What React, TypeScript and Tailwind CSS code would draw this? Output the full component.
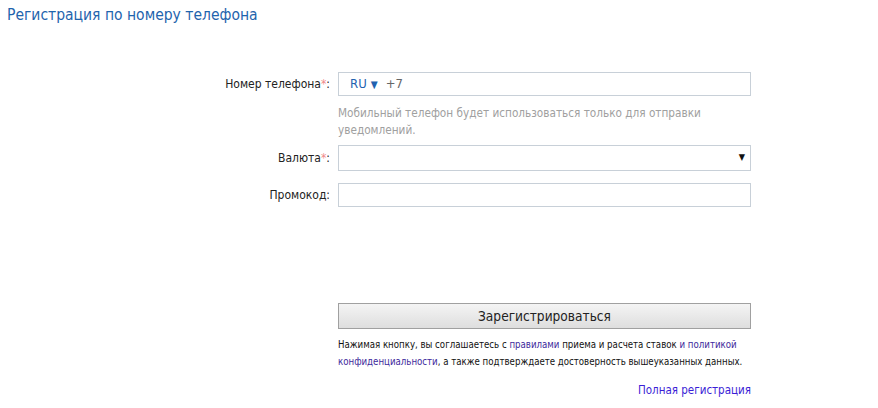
import React from 'react';

const font = { fontFamily: '"DejaVu Sans Condensed", "DejaVu Sans", sans-serif' };

function Label({ text, required }: { text: string; required?: boolean }) {
  return (
    <div className="w-[330px] shrink-0 text-right text-[12px] text-[#222]">
      {text}
      {required && <span className="text-[#f08a8a]">*</span>}:
    </div>
  );
}

export default function App() {
  return (
    <div className="w-[878px] h-[408px] bg-white relative" style={font}>
      {/* Title */}
      <h1 className="pl-[7px] pt-[5px] text-[15.5px] leading-[20px] text-[#1f64ad]">
        Регистрация по номеру телефона
      </h1>

      <div className="mt-[47px] flex flex-col">
        {/* Phone */}
        <div className="flex items-center gap-[8px]">
          <Label text="Номер телефона" required />
          <div className="w-[413px] h-[24px] border border-[#c8d0d8] flex items-center px-[11px] text-[13px]">
            <span className="text-[#2262b0]">RU</span>
            <span className="text-[#2262b0] text-[10px] ml-[4px]">▼</span>
            <span className="text-[#666] ml-[8px]">+7</span>
          </div>
        </div>
        <div className="ml-[338px] w-[413px] mt-[9px] text-[11.7px] leading-[17px] text-[#a0a0a0]">
          Мобильный телефон будет использоваться только для отправки уведомлений.
        </div>

        {/* Currency */}
        <div className="flex items-center gap-[8px] mt-[6px]">
          <Label text="Валюта" required />
          <div className="w-[413px] h-[26px] border border-[#c8d0d8] flex items-center justify-end pr-[5px]">
            <span className="text-[9px] text-[#111]">▼</span>
          </div>
        </div>

        {/* Promo */}
        <div className="flex items-center gap-[8px] mt-[12px]">
          <Label text="Промокод" />
          <div className="w-[413px] h-[24px] border border-[#c8d0d8]" />
        </div>

        {/* Button */}
        <div className="ml-[338px] w-[413px] mt-[96px]">
          <button className="w-full h-[26px] border border-[#a0a0a0] bg-gradient-to-b from-[#f4f4f4] to-[#dedede] text-[13.6px] text-[#222]">
            Зарегистрироваться
          </button>
          <p className="mt-[7px] text-[9.6px] leading-[17px] text-[#111]">
            Нажимая кнопку, вы соглашаетесь с <span className="text-[#3d2a9c]">правилами</span> приема и
            расчета ставок <span className="text-[#3d2a9c]">и политикой конфиденциальности</span>, а также
            подтверждаете достоверность вышеуказанных данных.
          </p>
          <div className="mt-[13px] text-right text-[11.5px] leading-[15px] text-[#3b1ed6]">Полная регистрация</div>
        </div>
      </div>
    </div>
  );
}
